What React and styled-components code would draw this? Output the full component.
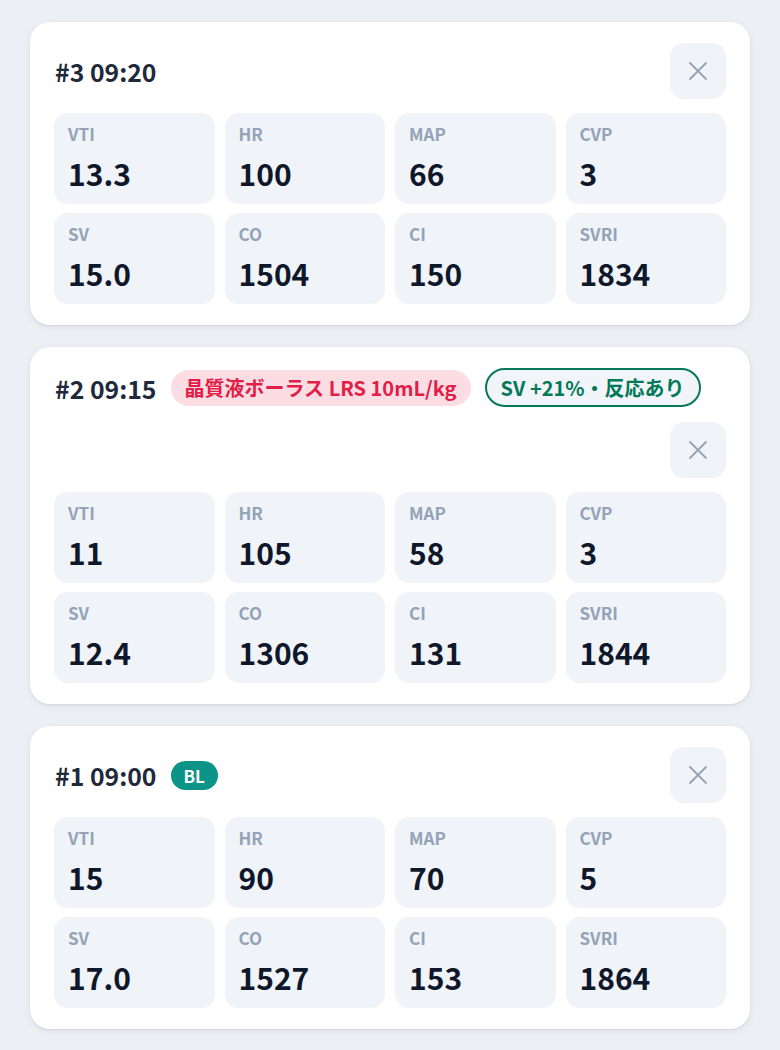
import React from 'react';
import styled, { createGlobalStyle } from 'styled-components';

const GlobalStyle = createGlobalStyle`
  html, body {
    margin: 0;
    padding: 0;
    background: #eceff4;
  }
  body {
    font-family: "Noto Sans CJK JP", "Noto Sans", sans-serif;
    color: #0f172a;
  }
`;

const records = [
  {
    id: 3,
    time: '09:20',
    tags: [],
    metrics: { VTI: '13.3', HR: '100', MAP: '66', CVP: '3', SV: '15.0', CO: '1504', CI: '150', SVRI: '1834' },
  },
  {
    id: 2,
    time: '09:15',
    tags: [
      { kind: 'fluid', text: '晶質液ボーラス LRS 10mL/kg' },
      { kind: 'response', text: 'SV +21%・反応あり' },
    ],
    metrics: { VTI: '11', HR: '105', MAP: '58', CVP: '3', SV: '12.4', CO: '1306', CI: '131', SVRI: '1844' },
  },
  {
    id: 1,
    time: '09:00',
    tags: [{ kind: 'baseline', text: 'BL' }],
    metrics: { VTI: '15', HR: '90', MAP: '70', CVP: '5', SV: '17.0', CO: '1527', CI: '153', SVRI: '1864' },
  },
];

export default function App() {
  return (
    <>
      <GlobalStyle />
      <Page>
        {records.map((rec) => (
          <Card key={rec.id}>
            <Header>
              <Title>#{rec.id} {rec.time}</Title>
              {rec.tags.map((tag) => (
                <Tag key={tag.text} $kind={tag.kind}>{tag.text}</Tag>
              ))}
              <CloseButton aria-label="削除">
                <svg width="22" height="22" viewBox="0 0 22 22" fill="none">
                  <path d="M3 3L19 19M19 3L3 19" stroke="#94a3b8" strokeWidth="1.8" strokeLinecap="round" />
                </svg>
              </CloseButton>
            </Header>
            <Grid>
              {Object.entries(rec.metrics).map(([label, value]) => (
                <Tile key={label}>
                  <Label>{label}</Label>
                  <Value>{value}</Value>
                </Tile>
              ))}
            </Grid>
          </Card>
        ))}
      </Page>
    </>
  );
}

const Page = styled.div`
  padding: 22px 30px;
  display: flex;
  flex-direction: column;
  gap: 22px;
`;

const Card = styled.section`
  background: #fff;
  border-radius: 20px;
  box-shadow: 0 1px 2px rgba(15, 23, 42, 0.08), 0 2px 8px rgba(15, 23, 42, 0.06);
  padding: 21px 24px 21px;
`;

const Header = styled.div`
  display: flex;
  flex-wrap: wrap;
  align-items: center;
  column-gap: 14px;
  row-gap: 15px;
  margin-bottom: 14px;
`;

const Title = styled.h3`
  margin: 0 0 0 1px;
  font-size: 24.8px;
  font-weight: 700;
  color: #1e293b;
  white-space: nowrap;
`;

const tagStyles = {
  fluid: `
    background: #fcdde3;
    color: #e11d48;
    border: 2px solid transparent;
    height: 36px;
    padding: 0 12px;
    font-size: 20px;
  `,
  response: `
    background: #f1f5f9;
    color: #047857;
    border: 2px solid #047857;
    height: 39px;
    padding: 0 14px;
    font-size: 20px;
  `,
  baseline: `
    background: #0d9488;
    color: #fff;
    border: none;
    height: 29px;
    padding: 0 13px;
    font-size: 17px;
  `,
};

const Tag = styled.span`
  display: inline-flex;
  align-items: center;
  box-sizing: border-box;
  border-radius: 999px;
  font-weight: 700;
  white-space: nowrap;
  ${(p) => tagStyles[p.$kind]}
`;

const CloseButton = styled.button`
  margin-left: auto;
  width: 56px;
  height: 56px;
  border: none;
  border-radius: 14px;
  background: #f0f3f8;
  display: flex;
  align-items: center;
  justify-content: center;
  cursor: pointer;
  padding: 0;
`;

const Grid = styled.div`
  display: grid;
  grid-template-columns: repeat(4, 1fr);
  gap: 9px 10px;
`;

const Tile = styled.div`
  background: #f0f3f8;
  border-radius: 14px;
  height: 91px;
  box-sizing: border-box;
  padding: 9px 14px 0;
  display: flex;
  flex-direction: column;
`;

const Label = styled.div`
  font-size: 17px;
  line-height: 24px;
  font-weight: 600;
  color: #94a3b8;
`;

const Value = styled.div`
  margin-top: 8px;
  font-size: 30px;
  line-height: 38px;
  font-weight: 700;
  color: #0f172a;
`;
